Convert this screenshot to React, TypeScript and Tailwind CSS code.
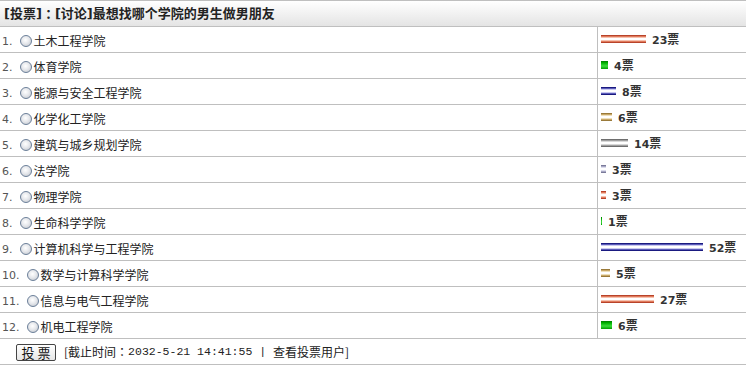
import React from "react";

type Opt = { label: string; votes: number; color: string };

const BARS: Record<string, string> = {
  red: "bg-[linear-gradient(to_bottom,#b8432a_0px,#b8432a_1px,#e07a5c_1px,#e07a5c_2px,#f6c2b0_2px,#f6c2b0_3px,#ffffff_3px,#ffffff_5px,#f6c2b0_5px,#f6c2b0_6px,#e07a5c_6px,#e07a5c_7px,#b8432a_7px,#b8432a_8px)]",
  green: "bg-[linear-gradient(to_bottom,#007a00_0px,#00b400_2px,#3cdc3c_5px,#00a000_8px)]",
  blue: "bg-[linear-gradient(to_bottom,#1a1a80_0px,#1a1a80_1px,#5a5ab8_1px,#5a5ab8_2px,#c8c8f0_2px,#c8c8f0_3px,#ffffff_3px,#ffffff_5px,#c8c8f0_5px,#c8c8f0_6px,#5a5ab8_6px,#5a5ab8_7px,#1a1a80_7px,#1a1a80_8px)]",
  tan: "bg-[linear-gradient(to_bottom,#9a7a3a_0px,#9a7a3a_1px,#c8a868_1px,#c8a868_2px,#eee0bc_2px,#eee0bc_3px,#ffffff_3px,#ffffff_5px,#eee0bc_5px,#eee0bc_6px,#c8a868_6px,#c8a868_7px,#9a7a3a_7px,#9a7a3a_8px)]",
  gray: "bg-[linear-gradient(to_bottom,#6e6e6e_0px,#6e6e6e_1px,#a0a0a0_1px,#a0a0a0_2px,#d8d8d8_2px,#d8d8d8_3px,#ffffff_3px,#ffffff_5px,#d8d8d8_5px,#d8d8d8_6px,#a0a0a0_6px,#a0a0a0_7px,#6e6e6e_7px,#6e6e6e_8px)]",
  lav: "bg-[linear-gradient(to_bottom,#7a7a9a_0px,#7a7a9a_1px,#a8a8c4_1px,#a8a8c4_2px,#dcdcec_2px,#dcdcec_3px,#ffffff_3px,#ffffff_5px,#dcdcec_5px,#dcdcec_6px,#a8a8c4_6px,#a8a8c4_7px,#7a7a9a_7px,#7a7a9a_8px)]",
};

const OPTS: Opt[] = [
  { label: "土木工程学院", votes: 23, color: "red" },
  { label: "体育学院", votes: 4, color: "green" },
  { label: "能源与安全工程学院", votes: 8, color: "blue" },
  { label: "化学化工学院", votes: 6, color: "tan" },
  { label: "建筑与城乡规划学院", votes: 14, color: "gray" },
  { label: "法学院", votes: 3, color: "lav" },
  { label: "物理学院", votes: 3, color: "red" },
  { label: "生命科学学院", votes: 1, color: "green" },
  { label: "计算机科学与工程学院", votes: 52, color: "blue" },
  { label: "数学与计算科学学院", votes: 5, color: "tan" },
  { label: "信息与电气工程学院", votes: 27, color: "red" },
  { label: "机电工程学院", votes: 6, color: "green" },
];

const TOTAL = OPTS.reduce((s, o) => s + o.votes, 0);

function Radio() {
  return (
    <span className="inline-block w-[12px] h-[12px] rounded-full border border-[#6b7f99] bg-[radial-gradient(circle_at_45%_40%,#ffffff_0%,#e6e8ec_45%,#b9bec6_100%)] shrink-0" />
  );
}

export default function App() {
  return (
    <div className="w-[746px] h-[365px] bg-white text-[#333] font-['Noto_Sans_CJK_SC',sans-serif] overflow-hidden">
      <div className="h-[27px] border-t border-b border-[#bfbfbf] bg-[linear-gradient(to_bottom,#ffffff,#e4e4e4)] flex items-center pl-[4px]">
        <span className="text-[13px] font-bold text-[#222] font-['DejaVu_Sans','Noto_Sans_CJK_SC',sans-serif] leading-none flex items-center">
          <span>[投票]</span>
          <span className="font-['Noto_Sans_CJK_TC',sans-serif] w-[13px]">：</span>
          <span>[讨论]最想找哪个学院的男生做男朋友</span>
        </span>
      </div>
      {OPTS.map((o, i) => {
        const w = Math.floor((o.votes / TOTAL) * 300);
        return (
          <div key={i} className="h-[26px] border-b border-[#bfbfbf] flex">
            <div className="w-[598px] border-r border-[#bfbfbf] flex items-center pl-[2px] pt-[3px]">
              <span className="text-[11px] font-['DejaVu_Sans',sans-serif] text-[#555] leading-none">
                {i + 1}.
              </span>
              <span className="ml-[7px] flex">
                <Radio />
              </span>
              <span className="ml-[2px] text-[12px] leading-none text-[#222]">{o.label}</span>
            </div>
            <div className="flex-1 flex items-center pl-[3px] pb-[1px]">
              <span className={`inline-block h-[8px] ${BARS[o.color]}`} style={{ width: `${w}px` }} />
              <span className="ml-[6px] flex items-baseline font-bold text-[#333] leading-none">
                <span className="text-[11px] font-['DejaVu_Sans',sans-serif]">{o.votes}</span>
                <span className="text-[12px]">票</span>
              </span>
            </div>
          </div>
        );
      })}
      <div className="h-[26px] border-b border-[#bfbfbf] flex items-center pl-[16px] pt-[1px]">
        <button className="w-[40px] h-[17px] border border-[#444] rounded-[2px] bg-[linear-gradient(to_bottom,#ffffff,#e6e6e6)] text-[13px] leading-none text-[#111] flex items-center justify-center">
          投 票
        </button>
        <span className="ml-[8px] text-[12px] leading-none text-[#222] flex items-center whitespace-pre">
          <span>[截止时间</span>
          <span className="font-['Noto_Sans_CJK_TC',sans-serif]">：</span>
          <span className="font-['Liberation_Mono',monospace] text-[11.5px]">{"2032-5-21 14:41:55 | "}</span>
          <span>查看投票用户]</span>
        </span>
      </div>
    </div>
  );
}
